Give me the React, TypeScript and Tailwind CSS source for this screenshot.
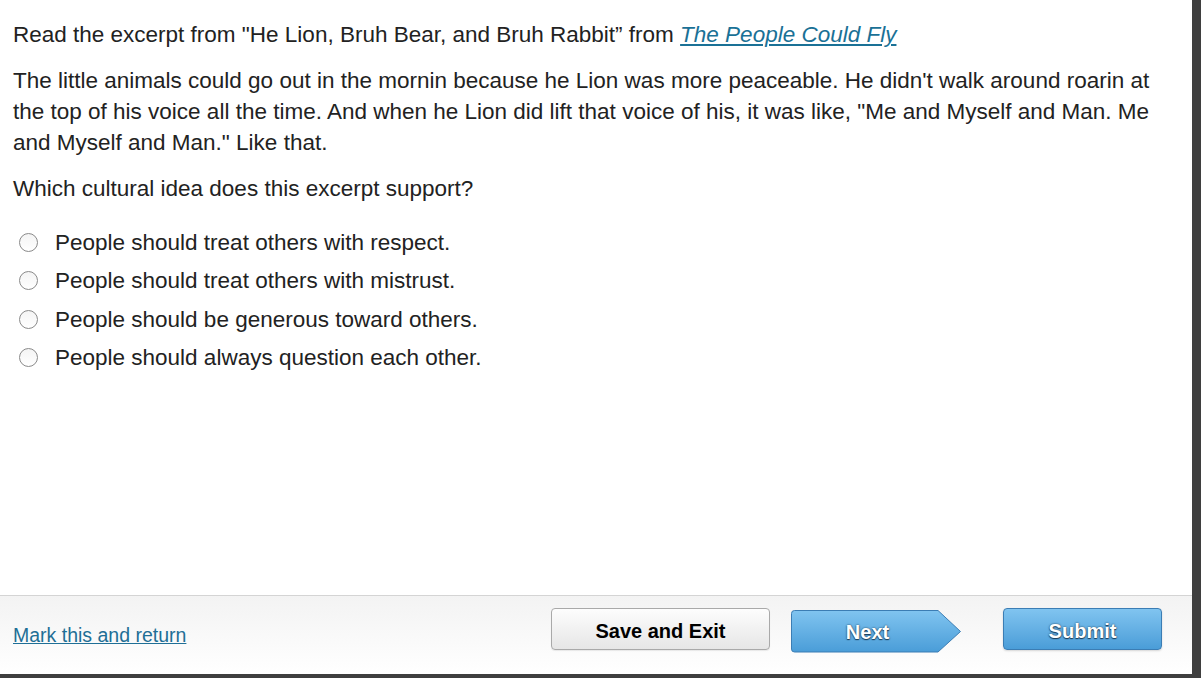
import React from "react";

const options = [
  "People should treat others with respect.",
  "People should treat others with mistrust.",
  "People should be generous toward others.",
  "People should always question each other.",
];

function Radio() {
  return (
    <span className="w-[19px] h-[19px] rounded-full border border-[#8a8a8a] bg-gradient-to-b from-[#f4f4f4] to-white shrink-0" />
  );
}

function NextButton() {
  return (
    <button type="button" className="relative w-[171px] h-[43px] mt-[14px] self-start">
      <svg className="absolute inset-0" width="171" height="43" viewBox="0 0 171 43">
        <defs>
          <linearGradient id="nextGrad" x1="0" y1="0" x2="0" y2="1">
            <stop offset="0" stopColor="#80c4f0" />
            <stop offset="1" stopColor="#4a9dd8" />
          </linearGradient>
        </defs>
        <path
          d="M3.5 0.5 H147 L169.5 21.5 L147 42 H3.5 Q0.5 42 0.5 39 V3.5 Q0.5 0.5 3.5 0.5 Z"
          fill="url(#nextGrad)"
          stroke="#3b7db4"
          strokeWidth="1"
        />
      </svg>
      <span className="relative flex items-center justify-center w-[153px] h-full pt-[1px] text-white font-bold text-[20px] [text-shadow:0_1px_1px_#1b3a55,0_0_2px_#1b3a55]">
        Next
      </span>
    </button>
  );
}

export default function App() {
  return (
    <div className="flex w-[1201px] h-[678px] bg-[#3f3f3f] font-['Liberation_Sans',Arial,sans-serif] text-[#222]">
      <div className="flex flex-col w-[1192px] h-[674px] bg-white">
        <div className="flex-1 px-[13px] pt-[19px] text-[22.5px] leading-[31px]">
          <p>
            Read the excerpt from "He Lion, Bruh Bear, and Bruh Rabbit” from{" "}
            <a href="#" className="italic underline text-[#1a7196]">
              The People Could Fly
            </a>
          </p>
          <p className="mt-[15px]">
            The little animals could go out in the mornin because he Lion was more peaceable. He didn't walk around roarin at
            the top of his voice all the time. And when he Lion did lift that voice of his, it was like, "Me and Myself and
            Man. Me and Myself and Man." Like that.
          </p>
          <p className="mt-[15px]">Which cultural idea does this excerpt support?</p>
          <div className="mt-[19px] flex flex-col">
            {options.map((o) => (
              <label key={o} className="flex items-center h-[38.5px] pl-[6px] gap-[17px]">
                <Radio />
                <span>{o}</span>
              </label>
            ))}
          </div>
        </div>
        <div className="flex h-[79px] border-t border-[#d4d4d4] bg-gradient-to-b from-[#f3f3f3] to-white pl-[13px] pr-[30px]">
          <a href="#" className="self-center mt-[2px] text-[19.5px] text-[#1f6f96] underline">
            Mark this and return
          </a>
          <div className="ml-auto flex items-start">
            <button
              type="button"
              className="mt-[12px] w-[219px] h-[42px] pt-[3px] rounded-[4px] border border-[#a9a9a9] bg-gradient-to-b from-[#fdfdfd] to-[#e6e6e6] text-black font-bold text-[20px] shadow-[0_1px_1px_rgba(0,0,0,0.08)]"
            >
              Save and Exit
            </button>
            <div className="ml-[21px]">
              <NextButton />
            </div>
            <button
              type="button"
              className="ml-[41px] mt-[12px] w-[159px] h-[42px] pt-[3px] rounded-[4px] border border-[#3b7db4] bg-gradient-to-b from-[#80c4f0] to-[#4a9dd8] text-white font-bold text-[20px] [text-shadow:0_1px_1px_#1b3a55,0_0_2px_#1b3a55] shadow-[0_1px_2px_rgba(0,0,0,0.15)]"
            >
              Submit
            </button>
          </div>
        </div>
      </div>
    </div>
  );
}
